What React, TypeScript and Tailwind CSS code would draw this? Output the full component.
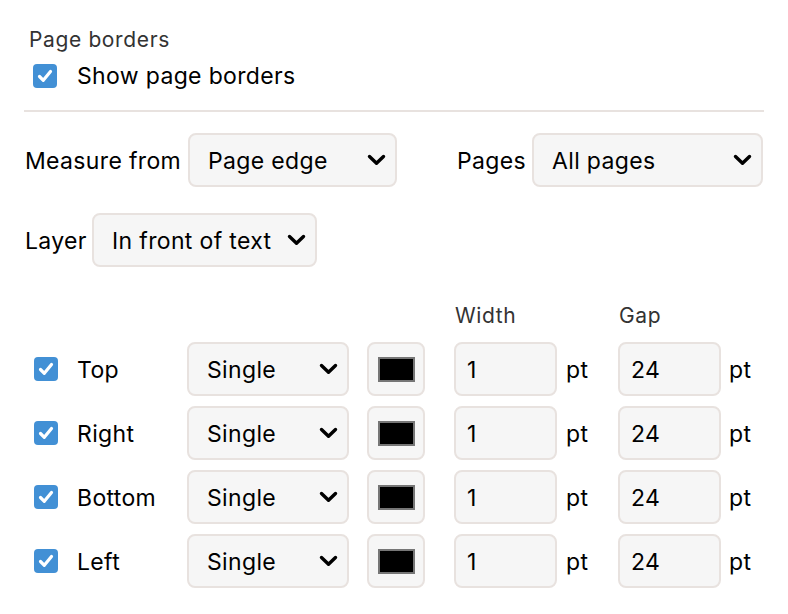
import React, { useState } from "react";

const font = { fontFamily: "Inter, 'Noto Sans', sans-serif" };

function Check({ on, onToggle }: { on: boolean; onToggle: () => void }) {
  return (
    <button
      onClick={onToggle}
      className={`w-[24px] h-[24px] rounded-[4px] flex items-center justify-center shrink-0 ${
        on ? "bg-[#4290d5]" : "bg-white border-2 border-[#c9c4c1]"
      }`}
    >
      {on && (
        <svg width="18" height="16" viewBox="0 0 18 16">
          <path
            d="M3.5 8.5 L7.3 12.3 L14.5 3.5"
            fill="none"
            stroke="#fff"
            strokeWidth="3.2"
            strokeLinecap="round"
            strokeLinejoin="round"
          />
        </svg>
      )}
    </button>
  );
}

function Chevron() {
  return (
    <svg width="19" height="12" viewBox="0 0 19 12" className="shrink-0">
      <path
        d="M2.5 2.5 L9.5 9.3 L16.5 2.5"
        fill="none"
        stroke="#000"
        strokeWidth="3.4"
        strokeLinecap="round"
        strokeLinejoin="round"
      />
    </svg>
  );
}

function Select({ value, width }: { value: string; width: string }) {
  return (
    <div
      className={`${width} h-[54px] shrink-0 flex items-center justify-between pl-[18px] pr-[9px] bg-[#f6f6f6] border-2 border-[#e8e2df] rounded-[8px] text-black`}
    >
      <span className="pt-[2px]">{value}</span>
      <Chevron />
    </div>
  );
}

function NumBox({ value }: { value: string }) {
  return (
    <div className="w-[103px] h-[54px] shrink-0 flex items-center pl-[11px] pt-[2px] bg-[#f6f6f6] border-2 border-[#e8e2df] rounded-[8px] text-black">
      {value}
    </div>
  );
}

const sides = ["Top", "Right", "Bottom", "Left"];

export default function App() {
  const [show, setShow] = useState(true);
  const [on, setOn] = useState<Record<string, boolean>>({
    Top: true,
    Right: true,
    Bottom: true,
    Left: true,
  });

  return (
    <div
      className="w-[788px] h-[614px] bg-white px-[24px] pt-[28px] text-[23px] tracking-[0.015em]"
      style={font}
    >
      {/* Page borders */}
      <div className="pl-[5px] text-[21px] tracking-[0.03em] leading-[24px] text-[#333]">
        Page borders
      </div>
      <div className="flex items-center pl-[9px] mt-[12px] h-[24px]">
        <Check on={show} onToggle={() => setShow(!show)} />
        <span className="ml-[20px] text-black">Show page borders</span>
      </div>

      <div className="mt-[22px] h-[2px] bg-[#e8e2df]" />

      {/* Measure / Pages */}
      <div className="flex items-center mt-[21px] text-black">
        <span className="pl-[1px] pt-[2px] w-[164px]">Measure from</span>
        <Select value="Page edge" width="w-[209px]" />
        <span className="ml-[60px] pt-[2px] w-[75px]">Pages</span>
        <Select value="All pages" width="w-[231px]" />
      </div>

      {/* Layer */}
      <div className="flex items-center mt-[26px] text-black">
        <span className="pl-[1px] pt-[2px] w-[68px]">Layer</span>
        <Select value="In front of text" width="w-[225px]" />
      </div>

      {/* Header */}
      <div className="flex mt-[37px] text-[21px] tracking-[0.03em] leading-[24px] text-[#333]">
        <span className="ml-[431px] w-[164px]">Width</span>
        <span>Gap</span>
      </div>

      {/* Border sides */}
      <div className="flex flex-col gap-[10px] mt-[14px]">
        {sides.map((s) => (
          <div key={s} className="flex items-center text-black">
            <div className="ml-[10px]">
              <Check on={on[s]} onToggle={() => setOn({ ...on, [s]: !on[s] })} />
            </div>
            <span className="ml-[19px] pt-[2px] w-[110px]">{s}</span>
            <Select value="Single" width="w-[162px]" />
            <div className="ml-[18px] w-[58px] h-[54px] shrink-0 flex items-center justify-center bg-[#f6f6f6] border-2 border-[#e8e2df] rounded-[8px]">
              <div className="w-[37px] h-[25px] bg-black border-2 border-[#767676]" />
            </div>
            <div className="ml-[29px]">
              <NumBox value="1" />
            </div>
            <span className="ml-[9px] pt-[2px] w-[52px]">pt</span>
            <NumBox value="24" />
            <span className="ml-[8px] pt-[2px]">pt</span>
          </div>
        ))}
      </div>
    </div>
  );
}
